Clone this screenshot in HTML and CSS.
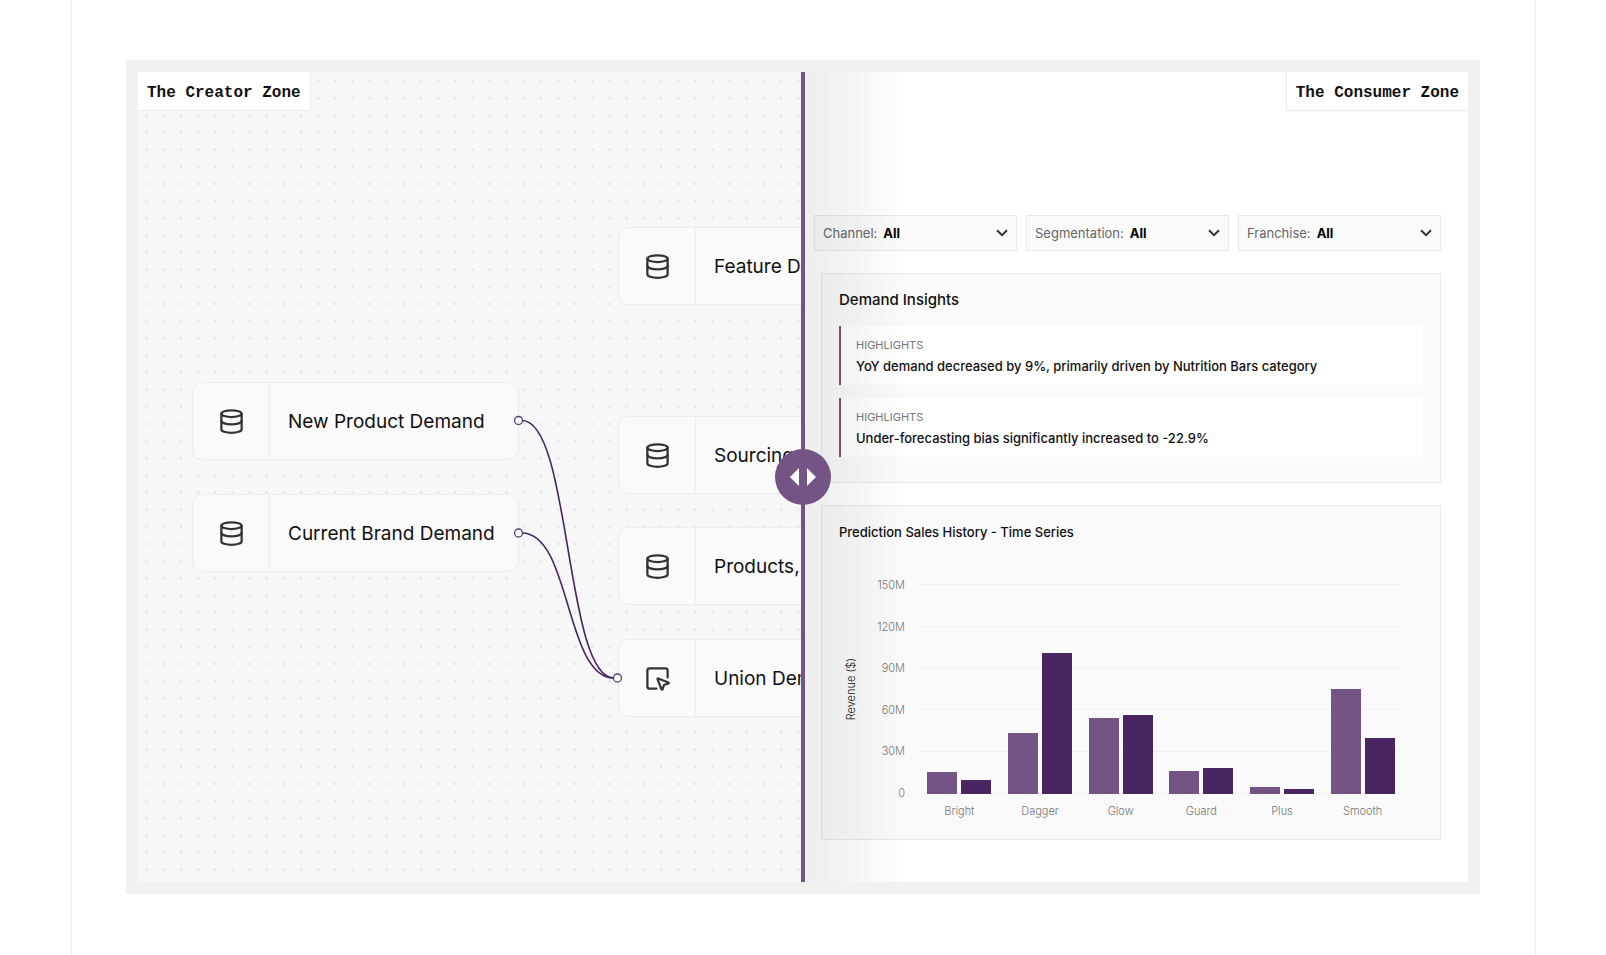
FILE: index.html
```html
<!DOCTYPE html>
<html lang="en">
<head>
  <meta charset="UTF-8" />
  <meta name="viewport" content="width=device-width, initial-scale=1.0"/>
  <title>Creator and Consumer Zones</title>
  <link rel="stylesheet" href="styles.css">
</head>
<body>

  <!-- Shared icons -->
  <svg class="sprite" aria-hidden="true">
    <symbol id="icon-database" viewBox="0 0 24 24">
      <ellipse cx="12" cy="5" rx="9" ry="3"/>
      <path d="M3 5v14c0 1.66 4.03 3 9 3s9-1.34 9-3V5"/>
      <path d="M3 11.5c0 1.66 4.03 3 9 3s9-1.34 9-3"/>
    </symbol>
    <symbol id="icon-select" viewBox="0 0 24 24">
      <path d="M12.034 12.681a.498.498 0 0 1 .647-.647l9 3.5a.5.5 0 0 1-.033.943l-3.444 1.068a1 1 0 0 0-.66.66l-1.067 3.443a.5.5 0 0 1-.943.033z"/>
      <path d="M21 11V5a2 2 0 0 0-2-2H5a2 2 0 0 0-2 2v14a2 2 0 0 0 2 2h6"/>
    </symbol>
    <symbol id="icon-chevron" viewBox="0 0 12 8">
      <path d="M1 1.2l5 5 5-5"/>
    </symbol>
  </svg>

  <main class="container">
    <div class="frame">

      <!-- Creator side -->
      <section class="creator">
        <svg class="wires" aria-hidden="true">
          <defs>
            <pattern id="dots" width="24" height="24" patternUnits="userSpaceOnUse" patternTransform="scale(.7143)">
              <circle cx="12.2" cy="12.6" r="2"/>
            </pattern>
          </defs>
          <rect class="dots" width="100%" height="100%" fill="url(#dots)"/>
        </svg>

        <h2 class="zone-label zone-left">The Creator Zone</h2>

        <div class="node node-product">
          <div class="node-icon"><svg><use href="#icon-database"/></svg></div>
          <span>New Product Demand</span>
        </div>
        <div class="node node-brand">
          <div class="node-icon"><svg><use href="#icon-database"/></svg></div>
          <span>Current Brand Demand</span>
        </div>
        <div class="node node-feature">
          <div class="node-icon"><svg><use href="#icon-database"/></svg></div>
          <span>Feature Demand</span>
        </div>
        <div class="node node-sourcing">
          <div class="node-icon"><svg><use href="#icon-database"/></svg></div>
          <span>Sourcing</span>
        </div>
        <div class="node node-products">
          <div class="node-icon"><svg><use href="#icon-database"/></svg></div>
          <span>Products,</span>
        </div>
        <div class="node node-union">
          <div class="node-icon"><svg><use href="#icon-select"/></svg></div>
          <span>Union Demand</span>
        </div>

        <svg class="wires" aria-hidden="true">
          <path class="wire" d="M384 348.5C433 348.5 427 606 476 606"/>
          <path class="wire" d="M384 461C433 461 427 606 476 606"/>
          <circle class="port" cx="380.5" cy="348.5" r="4"/>
          <circle class="port" cx="380.5" cy="461" r="4"/>
          <circle class="port" cx="479.5" cy="606" r="4"/>
        </svg>
      </section>

      <!-- Consumer side -->
      <section class="consumer">
        <h2 class="zone-label zone-right">The Consumer Zone</h2>

        <div class="filters">
          <div class="filter">
            <label for="channel">Channel:</label>
            <select id="channel"><option>All</option></select>
            <svg class="chevron"><use href="#icon-chevron"/></svg>
          </div>
          <div class="filter">
            <label for="segmentation">Segmentation:</label>
            <select id="segmentation"><option>All</option></select>
            <svg class="chevron"><use href="#icon-chevron"/></svg>
          </div>
          <div class="filter">
            <label for="franchise">Franchise:</label>
            <select id="franchise"><option>All</option></select>
            <svg class="chevron"><use href="#icon-chevron"/></svg>
          </div>
        </div>

        <div class="card insights">
          <h3>Demand Insights</h3>
          <div class="highlight">
            <small>HIGHLIGHTS</small>
            <p>YoY demand decreased by 9%, primarily driven by Nutrition Bars category</p>
          </div>
          <div class="highlight">
            <small>HIGHLIGHTS</small>
            <p>Under-forecasting bias significantly increased to -22.9%</p>
          </div>
        </div>

        <div class="card history">
          <h3>Prediction Sales History - Time Series</h3>
          <div class="chart">
            <div class="axis-title">Revenue ($)</div>
            <div class="y-axis">
              <span>150M</span>
              <span>120M</span>
              <span>90M</span>
              <span>60M</span>
              <span>30M</span>
              <span>0</span>
            </div>
            <div class="plot">
              <div class="grid">
                <i></i><i></i><i></i><i></i><i></i><i></i>
              </div>
              <div class="bars">
                <div class="group"><b style="height: 10.7%"></b><b style="height: 6.6%"></b></div>
                <div class="group"><b style="height: 29%"></b><b style="height: 67%"></b></div>
                <div class="group"><b style="height: 36%"></b><b style="height: 37.5%"></b></div>
                <div class="group"><b style="height: 11%"></b><b style="height: 12.4%"></b></div>
                <div class="group"><b style="height: 3.3%"></b><b style="height: 2.3%"></b></div>
                <div class="group"><b style="height: 49.8%"></b><b style="height: 26.8%"></b></div>
              </div>
            </div>
            <div class="x-axis">
              <span>Bright</span>
              <span>Dagger</span>
              <span>Glow</span>
              <span>Guard</span>
              <span>Plus</span>
              <span>Smooth</span>
            </div>
          </div>
        </div>
      </section>

      <!-- Divider between both zones -->
      <div class="divider">
        <button class="handle" aria-label="Drag to compare zones">
          <svg viewBox="0 0 28 18"><path d="M10 0v18L1 9zM18 0v18l9-9z"/></svg>
        </button>
      </div>

    </div>
  </main>

</body>
</html>
```

FILE: styles.css
```css
* {
  box-sizing: border-box;
}
body {
  margin: 0;
  font-family: Inter, 'Liberation Sans', sans-serif;
  background: #fff;
  color: #111;
}
h2, h3, p {
  margin: 0;
}
.sprite {
  display: none;
}

.container {
  max-width: 1466px;
  min-height: 100vh;
  margin: 0 auto;
  padding: 60px 54px;
  border: solid #f3f3f3;
  border-width: 0 2px;
}
.frame {
  position: relative;
  display: grid;
  grid-template-columns: 1fr 1fr;
  border: 12px solid #f1f1f1;
}

/* Zone labels */
.zone-label {
  position: absolute;
  top: 0;
  padding: 4px 9px 0;
  background: #fff;
  border: 0 solid #ebebeb;
  font: bold 16px/34px 'Liberation Mono', monospace;
}
.zone-left {
  left: 0;
  border-width: 0 1px 1px 0;
}
.zone-right {
  right: 0;
  border-width: 0 0 1px 1px;
}

/* Creator zone */
.creator {
  position: relative;
  overflow: hidden;
  background: #f7f7fa;
}
.wires {
  position: absolute;
  top: 0; left: 0;
  width: 100%; height: 100%;
}
#dots circle {
  fill: #e5e5e9;
}
.wire {
  fill: none;
  stroke: #492661;
  stroke-width: 1.6;
}
.port {
  fill: #fff;
  stroke: #5d3b76;
  stroke-width: 1.3;
}

.node {
  position: absolute;
  display: flex;
  align-items: center;
  width: 327px;
  height: 78px;
  background: #fafafa;
  border: 1px solid #ececec;
  border-radius: 11px;
  font-size: 19px;
  white-space: nowrap;
}
.node span {
  padding-left: 18px;
}
.node-icon {
  display: flex;
  align-items: center;
  justify-content: center;
  width: 77px;
  height: 100%;
  border-right: 1px solid #ececec;
}
.node-icon svg {
  width: 27px;
  height: 27px;
  fill: none;
  stroke: #333;
  stroke-width: 2;
  stroke-linecap: round;
  stroke-linejoin: round;
}
.node-product { left: 54px; top: 310px; }
.node-brand { left: 54px; top: 422px; }
.node-feature { left: 480px; top: 155px; }
.node-sourcing { left: 480px; top: 344px; }
.node-products { left: 480px; top: 455px; }
.node-union { left: 480px; top: 567px; }

/* Consumer zone */
.consumer {
  position: relative;
  padding: 143px 27px 42px 11px;
}
.consumer::after {
  content: '';
  position: absolute;
  top: 0; left: 0;
  width: 104px; height: 100%;
  background: linear-gradient(90deg, rgba(0, 0, 20, 0.07), rgba(0, 0, 20, 0.04) 50%, rgba(0, 0, 20, 0));
  pointer-events: none;
}

.filters {
  display: grid;
  grid-template-columns: repeat(3, 1fr);
  gap: 9px;
}
.filter {
  position: relative;
  display: flex;
  align-items: center;
  height: 36px;
  padding: 0 8px;
  background: #fafafa;
  border: 1px solid #e9e9e9;
  font-size: 13px;
}
.filter label {
  color: #666;
}
.filter select {
  flex: 1;
  min-width: 0;
  height: 100%;
  padding: 0 0 0 6px;
  appearance: none;
  background: none;
  border: none;
  color: #000;
  font: bold 13px Inter, sans-serif;
}
.chevron {
  position: absolute;
  right: 8px;
  width: 12px;
  height: 8px;
  fill: none;
  stroke: #333;
  stroke-width: 2;
  pointer-events: none;
}

.card {
  margin-left: 7px;
  padding: 17px;
  background: #fafafa;
  border: 1px solid #e9e9e9;
}
.insights {
  margin-top: 22px;
  padding-bottom: 25px;
}
.insights h3 {
  margin-bottom: 18px;
  font-size: 15px;
  font-weight: 500;
  line-height: 17px;
}
.highlight {
  padding: 11px 15px 10px;
  background: #fff;
  border-left: 2px solid #745485;
}
.highlight + .highlight {
  margin-top: 13px;
}
.highlight small {
  display: block;
  color: #777;
  font-size: 11px;
  line-height: 16px;
}
.highlight p {
  padding-top: 4px;
  font-size: 13px;
  font-weight: 500;
  line-height: 18px;
}

.history {
  margin-top: 22px;
}
.history h3 {
  font-size: 13px;
  font-weight: 500;
  line-height: 18px;
}

/* Bar chart */
.chart {
  display: grid;
  grid-template-columns: 23px 29px 1fr;
  grid-template-rows: 210px 28px;
  column-gap: 14px;
  margin-top: 43px;
  padding-right: 20px;
  font-size: 11px;
  font-weight: 300;
  color: #777;
}
.axis-title {
  align-self: center;
  justify-self: center;
  writing-mode: vertical-rl;
  transform: rotate(180deg);
  color: #111;
}
.y-axis {
  display: flex;
  flex-direction: column;
  justify-content: space-between;
  margin: -7px 0;
  line-height: 16px;
  text-align: right;
}
.plot {
  display: grid;
}
.grid, .bars {
  grid-area: 1 / 1;
}
.grid {
  display: flex;
  flex-direction: column;
  justify-content: space-between;
}
.grid i {
  height: 1px;
  background: #f1f1f1;
}
.bars, .x-axis {
  display: grid;
  grid-template-columns: repeat(6, 1fr);
}
.group {
  display: flex;
  align-items: flex-end;
  justify-content: center;
  gap: 4px;
}
.group b {
  width: 30px;
  background: #745485;
}
.group b + b {
  background: #492661;
}
.x-axis {
  grid-column: 3;
  padding-top: 9px;
  line-height: 16px;
  text-align: center;
}

/* Divider */
.divider {
  position: absolute;
  top: 0; bottom: 0;
  left: 50%;
  display: flex;
  align-items: center;
  justify-content: center;
  width: 4px;
  margin-left: -2px;
  background: #745485;
}
.handle {
  flex: none;
  display: flex;
  align-items: center;
  justify-content: center;
  width: 56px;
  height: 56px;
  padding: 0;
  background: #745485;
  border: none;
  border-radius: 50%;
  cursor: ew-resize;
}
.handle svg {
  width: 28px;
  height: 18px;
  fill: #fff;
}
```
